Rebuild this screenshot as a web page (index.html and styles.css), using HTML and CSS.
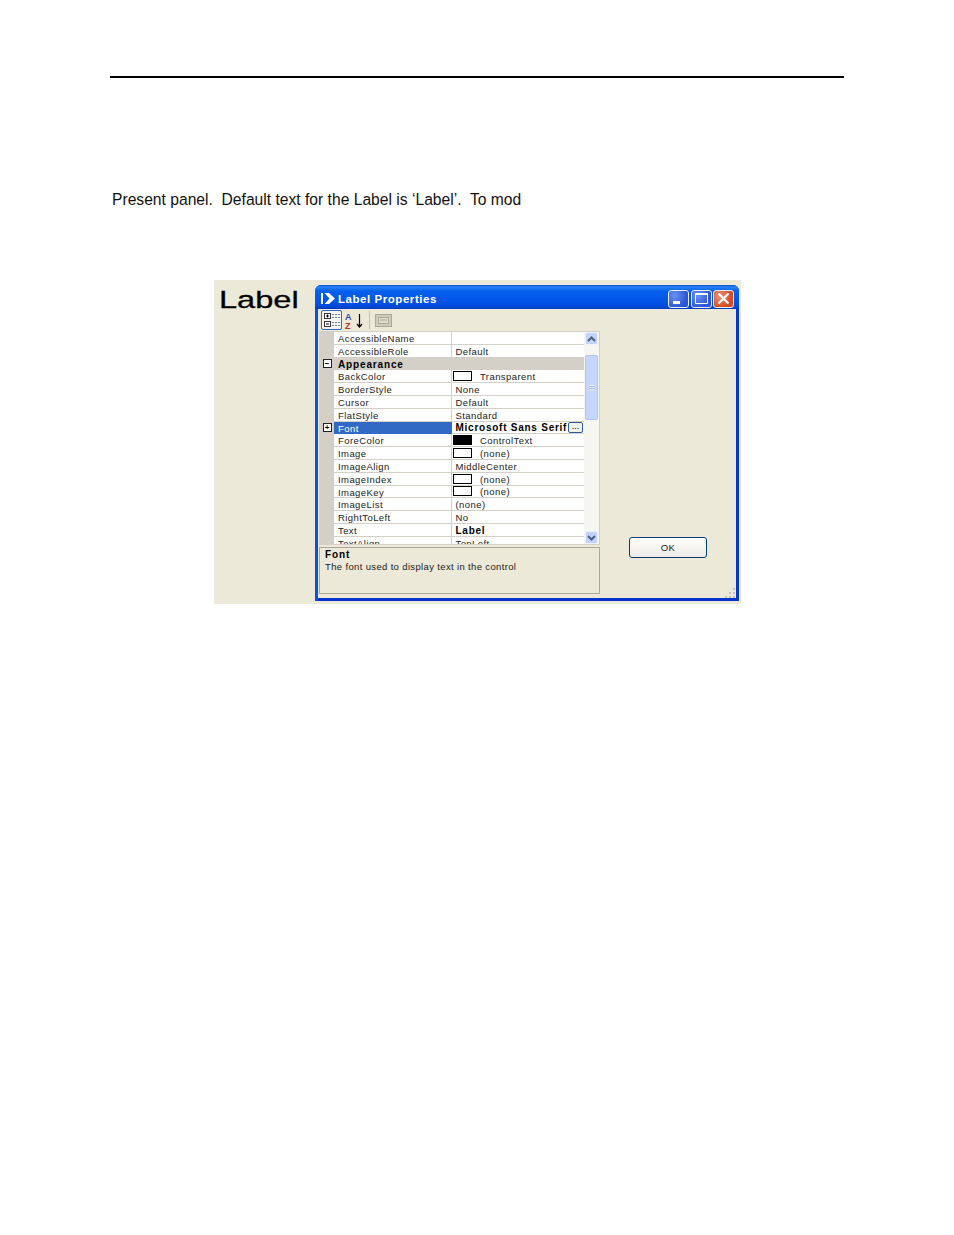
FILE: index.html
```html
<!DOCTYPE html>
<html lang="en">
<head>
<meta charset="utf-8">
<title>Label Properties</title>
<link rel="stylesheet" href="styles.css">
</head>
<body>
<div class="rule"></div>
<p class="para">Present panel.  Default text for the Label is ‘Label’.  To mod</p>
<div class="figure">
  <div class="biglabel-col"><span class="biglabel">Label</span></div>
  <div class="window">
    <div class="titlebar">
      <svg class="logo" width="15" height="11" viewBox="0 0 15 11"><path d="M0 0h2v11H0zM3.500 0H8l6 5.500L8 11H3.500L8.500 5.500z" fill="#fff"/></svg>
      <span class="title">Label Properties</span>
      <div class="ctrls">
        <div class="ctrl"><svg width="21" height="17" viewBox="0 0 21 17"><rect x="5" y="11" width="7" height="3" fill="#fff"/></svg></div>
        <div class="ctrl"><svg width="21" height="17" viewBox="0 0 21 17"><path d="M4.500 4.500h12v9h-12z" fill="none" stroke="#fff"/><path d="M4 3h13v2H4z" fill="#fff"/></svg></div>
        <div class="ctrl close"><svg width="21" height="17" viewBox="0 0 21 17"><path d="M5.500 3.500l10 10M15.500 3.500l-10 10" stroke="#fff" stroke-width="2.200"/></svg></div>
      </div>
    </div>
    <div class="toolbar">
      <div class="tbtn"><svg width="18" height="16" viewBox="0 0 18 16"><rect x="1.500" y="1.500" width="6" height="5" fill="#fff" stroke="#333"/><path d="M3 4h3M4.500 2.500v3" stroke="#000"/><rect x="1.500" y="9.500" width="6" height="5" fill="#fff" stroke="#333"/><path d="M3 12h3" stroke="#000"/><path d="M9 2.500h8M9 5.500h8M9 10.500h8M9 13.500h8" stroke="#6f7f9c" stroke-dasharray="2 1"/></svg></div>
      <svg class="az" width="20" height="17" viewBox="0 0 20 17"><text class="az-a" x="1" y="8">A</text><text class="az-z" x="1" y="16.500">Z</text><path d="M15.500 2v13M13 12l2.500 3 2.500-3" fill="none" stroke="#000" stroke-width="1.200"/></svg>
      <div class="tsep"></div>
      <svg class="pages" width="17" height="13" viewBox="0 0 17 13"><rect x=".5" y=".5" width="16" height="12" fill="#cfccbc" stroke="#aca899"/><rect x="3.500" y="3.500" width="10" height="6" fill="#e0ddd0" stroke="#aca899"/><path d="M5 6h7" stroke="#aca899"/></svg>
    </div>
    <div class="main">
      <div class="leftcol">
        <div class="grid">
          <div class="rows">
            <div class="row"><div class="gut"></div><div class="name">AccessibleName</div><div class="val"></div></div>
            <div class="row"><div class="gut"></div><div class="name">AccessibleRole</div><div class="val">Default</div></div>
            <div class="row cat"><div class="gut"><span class="box">−</span></div><div class="catname">Appearance</div></div>
            <div class="row"><div class="gut"></div><div class="name">BackColor</div><div class="val swv"><span class="sw"></span>Transparent</div></div>
            <div class="row"><div class="gut"></div><div class="name">BorderStyle</div><div class="val">None</div></div>
            <div class="row"><div class="gut"></div><div class="name">Cursor</div><div class="val">Default</div></div>
            <div class="row"><div class="gut"></div><div class="name">FlatStyle</div><div class="val">Standard</div></div>
            <div class="row sel"><div class="gut"><span class="box">+</span></div><div class="name">Font</div><div class="val bold">Microsoft Sans Serif<span class="dots">...</span></div></div>
            <div class="row"><div class="gut"></div><div class="name">ForeColor</div><div class="val swv"><span class="sw black"></span>ControlText</div></div>
            <div class="row"><div class="gut"></div><div class="name">Image</div><div class="val swv"><span class="sw"></span>(none)</div></div>
            <div class="row"><div class="gut"></div><div class="name">ImageAlign</div><div class="val">MiddleCenter</div></div>
            <div class="row"><div class="gut"></div><div class="name">ImageIndex</div><div class="val swv"><span class="sw"></span>(none)</div></div>
            <div class="row"><div class="gut"></div><div class="name">ImageKey</div><div class="val swv"><span class="sw"></span>(none)</div></div>
            <div class="row"><div class="gut"></div><div class="name">ImageList</div><div class="val">(none)</div></div>
            <div class="row"><div class="gut"></div><div class="name">RightToLeft</div><div class="val">No</div></div>
            <div class="row"><div class="gut"></div><div class="name">Text</div><div class="val bold">Label</div></div>
            <div class="row"><div class="gut"></div><div class="name">TextAlign</div><div class="val">TopLeft</div></div>
          </div>
          <div class="scroll">
            <div class="sbtn"><svg width="9" height="6" viewBox="0 0 9 6"><path d="M1 5l3.500-3.500L8 5" fill="none" stroke="#4d6185" stroke-width="2"/></svg></div>
            <div class="track-top"></div>
            <div class="thumb"><div class="grip"></div></div>
            <div class="track-bot"></div>
            <div class="sbtn"><svg width="9" height="6" viewBox="0 0 9 6"><path d="M1 1l3.500 3.500L8 1" fill="none" stroke="#4d6185" stroke-width="2"/></svg></div>
          </div>
        </div>
        <div class="help">
          <div class="help-t">Font</div>
          <div class="help-d">The font used to display text in the control</div>
        </div>
      </div>
      <div class="rightcol">
        <div class="okbtn">OK</div>
        <svg class="resize" width="11" height="11" viewBox="0 0 11 11"><path d="M8 1h2v2H8zM4 5h2v2H4zM8 5h2v2H8zM0 9h2v2H0zM4 9h2v2H4zM8 9h2v2H8z" fill="#c4c1b0"/></svg>
      </div>
    </div>
  </div>
</div>
</body>
</html>
```
FILE: styles.css
```css
html, body { margin: 0; padding: 0; background: #fff; }
body { width: 954px; height: 1235px; overflow: hidden; font-family: "Liberation Sans", Arial, sans-serif; color: #000; }
.rule { height: 2px; background: #000; margin: 76px 110px 0 110px; }
.para { margin: 112px 0 0 112px; font-size: 15.65px; line-height: 20px; white-space: pre; color: #111; }
.figure { display: flex; margin: 70px 0 0 214px; width: 527px; height: 324px; padding: 5px 2px 3px 0; box-sizing: border-box; background: #ece9d8; }
.biglabel-col { width: 101px; flex: none; }
.biglabel { display: block; font-size: 24.5px; line-height: 28px; margin: 1px 0 0 5px; transform: scaleX(1.33); transform-origin: left top; -webkit-text-stroke: .3px #000; }
.window { width: 424px; height: 316px; box-sizing: border-box; display: flex; flex-direction: column; background: #ece9d8; border-radius: 6px 6px 0 0; overflow: hidden; box-shadow: inset 3px 0 0 #0a50e4, inset -3px 0 0 #0537c8, inset 0 -3px 0 #0832d0; }
.titlebar { height: 24px; box-sizing: border-box; flex: none; display: flex; align-items: center; background: linear-gradient(#0a4fd8 0, #2a83f2 8%, #0560ec 25%, #0254e6 70%, #0348d6 92%, #0338b8 100%); padding: 3px 5px 0 6px; }
.logo { flex: none; }
.title { margin-left: 2px; color: #fff; font-weight: bold; font-size: 11.5px; letter-spacing: .55px; white-space: nowrap; }
.ctrls { margin-left: auto; display: flex; gap: 1.5px; }
.ctrl { width: 21px; height: 18px; box-sizing: border-box; border: 1px solid #e8eefc; border-radius: 3px; background: radial-gradient(circle at 30% 30%, #6d92ef, #2b55d8 70%); display: flex; }
.ctrl svg { margin: -1px; flex: none; }
.close { background: radial-gradient(circle at 30% 30%, #ec9273, #d34a21 70%); }
.toolbar { height: 22px; flex: none; display: flex; align-items: center; padding-left: 6px; }
.tbtn { width: 21px; height: 20px; box-sizing: border-box; border: 1px solid #316ac5; border-radius: 2px; background: #f4f3ee; display: flex; align-items: center; justify-content: center; }
.az { margin-left: 2px; flex: none; }
.az-a { font: bold 9px "Liberation Sans", sans-serif; fill: #2a4fb0; }
.az-z { font: bold 9px "Liberation Sans", sans-serif; fill: #b03030; }
.tsep { width: 1px; height: 18px; background: #c4c1b0; margin-left: 5px; }
.pages { margin-left: 5px; flex: none; }
.main { flex: 1; display: flex; min-height: 0; padding-left: 4px; }
.leftcol { width: 281px; flex: none; }
.grid { height: 214px; display: flex; background: #fff; border: 1px solid #d4d0c8; box-sizing: border-box; overflow: hidden; }
.rows { width: 264px; flex: none; }
.row { height: 12.8px; display: flex; font-size: 9.5px; letter-spacing: .42px; line-height: 13px; color: #222; background: #fff; box-shadow: inset 0 -1px 0 #d4d0c8; white-space: nowrap; }
.gut { width: 14px; flex: none; background: #d4d0c8; display: flex; align-items: center; justify-content: center; }
.name { width: 114px; flex: none; padding-left: 4px; box-shadow: inset -1px 0 0 #d4d0c8; overflow: hidden; }
.val { flex: 1; padding-left: 3.5px; min-width: 0; overflow: hidden; display: flex; align-items: center; }
.swv { padding-left: 1px; }
.sw { width: 19px; height: 10px; box-sizing: border-box; border: 1px solid #000; background: #fff; flex: none; margin: 0 8px 1px 0; }
.black { background: #000; }
.cat { background: #d4d0c8; box-shadow: none; }
.catname { font-weight: bold; font-size: 10px; padding-left: 4px; letter-spacing: .85px; color: #000; }
.box { width: 9px; height: 9px; box-sizing: border-box; border: 1px solid #222; background: #fff; font-size: 8px; line-height: 7px; letter-spacing: 0; text-align: center; color: #000; font-weight: bold; }
.sel .name { background: #316ac5; color: #fff; box-shadow: none; }
.bold { font-weight: bold; font-size: 10px; color: #000; letter-spacing: .75px; }
.dots { flex: none; width: 15px; height: 11px; box-sizing: border-box; border: 1px solid #2a5a9a; border-radius: 2px; background: #f2f1ea; font-size: 9px; font-weight: normal; line-height: 6px; text-align: center; letter-spacing: 0; color: #000; margin-left: auto; margin-right: 1px; }
.scroll { flex: 1; display: flex; flex-direction: column; background: #f6f6f0; padding: 0 1px 0 1px; }
.sbtn { height: 13px; flex: none; background: #c3d3fb; border: 1px solid #eef2fd; box-sizing: border-box; border-radius: 2px; display: flex; align-items: center; justify-content: center; }
.track-top { height: 10px; flex: none; }
.thumb { height: 65px; flex: none; background: #c6d5fc; border: 1px solid #b0c4f4; border-radius: 2px; box-sizing: border-box; display: flex; align-items: center; justify-content: center; }
.grip { width: 6px; height: 5px; background: repeating-linear-gradient(#eef2fe 0 1px, #9db4ea 1px 2px); }
.track-bot { flex: 1; }
.help { height: 47px; margin-top: 2px; box-sizing: border-box; border: 1px solid #aca899; padding: 1px 5px; font-size: 9.5px; letter-spacing: .35px; line-height: 12px; color: #222; }
.help-t { font-weight: bold; font-size: 10px; color: #000; letter-spacing: .9px; }
.rightcol { flex: 1; position: relative; display: flex; align-items: flex-start; padding: 206px 0 0 29px; }
.okbtn { width: 78px; height: 21px; box-sizing: border-box; border: 1px solid #003c74; border-radius: 3px; background: linear-gradient(#fff, #ecebe5); font-size: 9.5px; line-height: 19px; letter-spacing: .4px; text-align: center; color: #222; }
.resize { position: absolute; right: 3px; bottom: 3px; }
```
